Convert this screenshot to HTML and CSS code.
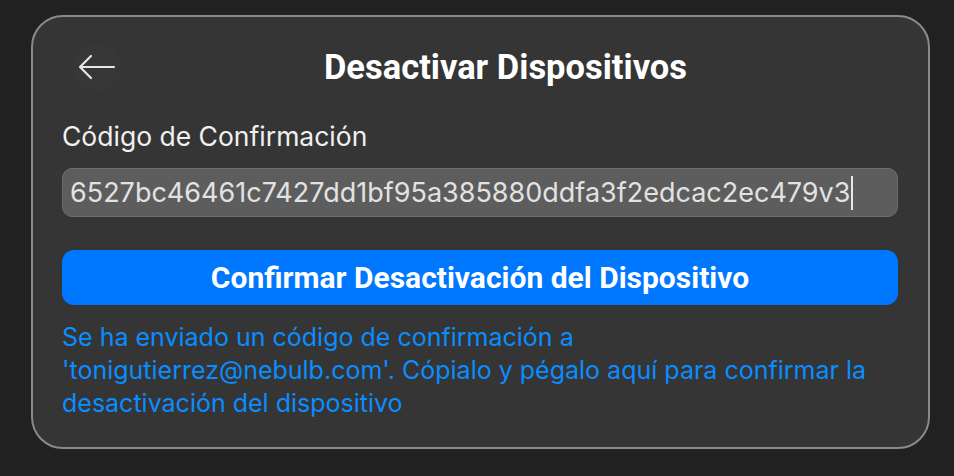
FILE: index.html
```html
<!DOCTYPE html>
<html lang="es">
<head>
<meta charset="utf-8">
<link rel="stylesheet" href="styles.css">
</head>
<body>
<div class="card">
  <div class="header">
    <button class="back" aria-label="Atrás">
      <svg width="38" height="28" viewBox="0 0 38 28" fill="none" stroke="#e6e6e6" stroke-width="2.2" stroke-linecap="round" stroke-linejoin="round">
        <path d="M36 14H2M13 3L2 14l11 11"/>
      </svg>
    </button>
    <h1 class="title">Desactivar Dispositivos</h1>
  </div>
  <label class="label">Código de Confirmación</label>
  <div class="input"><span class="value">6527bc46461c7427dd1bf95a385880ddfa3f2edcac2ec479v3</span><span class="caret"></span></div>
  <button class="confirm">Confirmar Desactivación del Dispositivo</button>
  <p class="note">Se ha enviado un código de confirmación a 'tonigutierrez@nebulb.com'. Cópialo y pégalo aquí para confirmar la desactivación del dispositivo</p>
</div>
</body>
</html>
```
FILE: styles.css
```css
html, body {
  margin: 0;
  padding: 0;
  background: #212121;
  width: 954px;
  height: 476px;
  overflow: hidden;
}
body {
  padding: 15px 0 0 31px;
  box-sizing: border-box;
  font-family: Inter, "Noto Sans", sans-serif;
}
.card {
  width: 899px;
  height: 434px;
  box-sizing: border-box;
  background: #353535;
  border: 2px solid #8a8a8a;
  border-radius: 32px;
  padding: 0 30px 0 29px;
}
.header {
  height: 100px;
  display: flex;
  align-items: center;
}
.back {
  flex: none;
  margin-left: 11px;
  margin-top: -1px;
  width: 48px;
  height: 48px;
  border-radius: 50%;
  background: #373737;
  border: none;
  padding: 0;
  display: flex;
  align-items: center;
  justify-content: center;
}
.title {
  flex: 1;
  margin: 0;
  padding-right: 8px;
  text-align: center;
  font-family: Roboto, sans-serif;
  font-weight: 700;
  font-size: 34.5px;
  color: #ffffff;
}
.label {
  display: block;
  font-size: 26.5px;
  color: #f0f0f0;
  margin-top: 4px;
  line-height: 30px;
}
.input {
  margin-top: 17px;
  height: 49px;
  box-sizing: border-box;
  background: #5d5d5d;
  border: 1px solid #6c6c6c;
  border-radius: 10px;
  display: flex;
  align-items: center;
  padding-left: 7px;
  color: #e2e2e2;
  font-size: 27px;
}
.caret {
  display: inline-block;
  width: 2px;
  height: 34px;
  background: #e8e8e8;
  margin-left: 1px;
}
.confirm {
  display: block;
  width: 100%;
  margin-top: 33px;
  height: 55px;
  border: none;
  border-radius: 12px;
  background: #0077ff;
  color: #ffffff;
  font-family: Roboto, sans-serif;
  font-weight: 700;
  font-size: 30px;
}
.note {
  margin: 16px 0 0;
  color: #0a8dff;
  font-size: 25px;
  line-height: 33px;
}
```
